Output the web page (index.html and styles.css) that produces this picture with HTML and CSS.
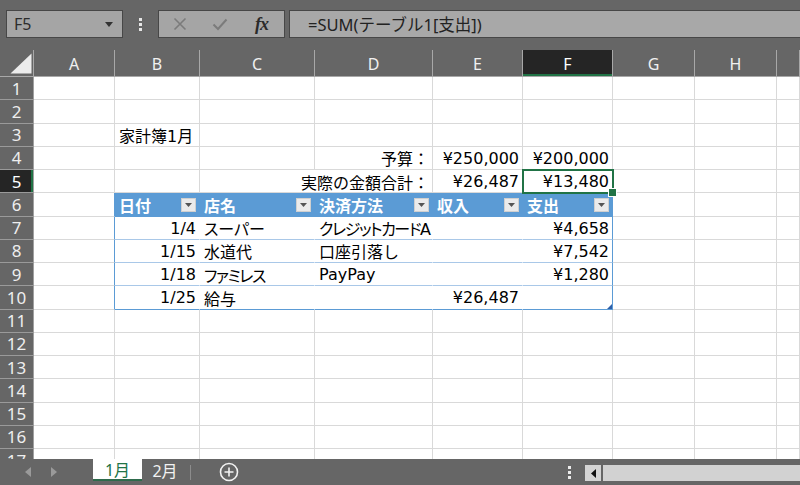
FILE: index.html
```html
<!DOCTYPE html>
<html lang="ja">
<head>
<meta charset="utf-8">
<title>家計簿</title>
<link rel="stylesheet" href="styles.css">
</head>
<body>
<div class="app">
  <div class="topbar">
    <div class="namebox"><span>F5</span><svg class="caret" width="8" height="5" viewBox="0 0 8 5"><path d="M0 0H8L4 5Z" fill="#333"/></svg></div>
    <div class="vdots"><i></i><i></i><i></i></div>
    <div class="fxbox">
      <span class="slot"><svg width="14" height="14" viewBox="0 0 14 14"><path d="M1.5 1.5L12.5 12.5M12.5 1.5L1.5 12.5" stroke="#7b7b7b" stroke-width="1.6"/></svg></span>
      <span class="slot"><svg width="16" height="13" viewBox="0 0 16 13"><path d="M1.5 6.5L6 11L14.5 1.5" stroke="#7b7b7b" stroke-width="2" fill="none"/></svg></span>
      <span class="slot fx">fx</span>
    </div>
    <div class="formula">=SUM(テーブル1[支出])</div>
  </div>

  <div class="sheet">
    <div class="corner"><svg width="33" height="26" viewBox="0 0 33 26"><path d="M10.5 23.5L31.5 3.5V23.5Z" fill="#ececec"/></svg></div>
    <div class="ch">A</div><div class="ch">B</div><div class="ch">C</div><div class="ch">D</div><div class="ch">E</div><div class="ch on">F</div><div class="ch">G</div><div class="ch">H</div><div class="ch"></div>

    <div class="rh">1</div><div class="c"></div><div class="c"></div><div class="c"></div><div class="c"></div><div class="c"></div><div class="c"></div><div class="c"></div><div class="c"></div><div class="c"></div>
    <div class="rh">2</div><div class="c"></div><div class="c"></div><div class="c"></div><div class="c"></div><div class="c"></div><div class="c"></div><div class="c"></div><div class="c"></div><div class="c"></div>
    <div class="rh">3</div><div class="c"></div><div class="c">家計簿1月</div><div class="c"></div><div class="c"></div><div class="c"></div><div class="c"></div><div class="c"></div><div class="c"></div><div class="c"></div>
    <div class="rh">4</div><div class="c"></div><div class="c"></div><div class="c"></div><div class="c r">予算：</div><div class="c r">¥250,000</div><div class="c r">¥200,000</div><div class="c"></div><div class="c"></div><div class="c"></div>
    <div class="rh on">5</div><div class="c"></div><div class="c"></div><div class="c r span2">実際の金額合計：</div><div class="c r">¥26,487</div><div class="c r sel">¥13,480</div><div class="c"></div><div class="c"></div><div class="c"></div>
    <div class="rh">6</div><div class="c tl"></div><div class="c th">日付<span class="dd"><svg width="7" height="4" viewBox="0 0 7 4"><path d="M0 0H7L3.5 4Z" fill="#555"/></svg></span></div><div class="c th">店名<span class="dd"><svg width="7" height="4" viewBox="0 0 7 4"><path d="M0 0H7L3.5 4Z" fill="#555"/></svg></span></div><div class="c th">決済方法<span class="dd"><svg width="7" height="4" viewBox="0 0 7 4"><path d="M0 0H7L3.5 4Z" fill="#555"/></svg></span></div><div class="c th">収入<span class="dd"><svg width="7" height="4" viewBox="0 0 7 4"><path d="M0 0H7L3.5 4Z" fill="#555"/></svg></span></div><div class="c th">支出<span class="dd"><svg width="7" height="4" viewBox="0 0 7 4"><path d="M0 0H7L3.5 4Z" fill="#555"/></svg></span></div><div class="c"></div><div class="c"></div><div class="c"></div>
    <div class="rh">7</div><div class="c tl"></div><div class="c tb r">1/4</div><div class="c tb p">スーパー</div><div class="c tb p tight">クレジットカードA</div><div class="c tb"></div><div class="c tb tr r">¥4,658</div><div class="c"></div><div class="c"></div><div class="c"></div>
    <div class="rh">8</div><div class="c tl"></div><div class="c tb r">1/15</div><div class="c tb">水道代</div><div class="c tb">口座引落し</div><div class="c tb"></div><div class="c tb tr r">¥7,542</div><div class="c"></div><div class="c"></div><div class="c"></div>
    <div class="rh">9</div><div class="c tl"></div><div class="c tb r">1/18</div><div class="c tb p tight">ファミレス</div><div class="c tb">PayPay</div><div class="c tb"></div><div class="c tb tr r">¥1,280</div><div class="c"></div><div class="c"></div><div class="c"></div>
    <div class="rh">10</div><div class="c tl"></div><div class="c tb tbot r">1/25</div><div class="c tb tbot">給与</div><div class="c tb tbot"></div><div class="c tb tbot r">¥26,487</div><div class="c tb tbot tr grip"></div><div class="c"></div><div class="c"></div><div class="c"></div>
    <div class="rh">11</div><div class="c"></div><div class="c"></div><div class="c"></div><div class="c"></div><div class="c"></div><div class="c"></div><div class="c"></div><div class="c"></div><div class="c"></div>
    <div class="rh">12</div><div class="c"></div><div class="c"></div><div class="c"></div><div class="c"></div><div class="c"></div><div class="c"></div><div class="c"></div><div class="c"></div><div class="c"></div>
    <div class="rh">13</div><div class="c"></div><div class="c"></div><div class="c"></div><div class="c"></div><div class="c"></div><div class="c"></div><div class="c"></div><div class="c"></div><div class="c"></div>
    <div class="rh">14</div><div class="c"></div><div class="c"></div><div class="c"></div><div class="c"></div><div class="c"></div><div class="c"></div><div class="c"></div><div class="c"></div><div class="c"></div>
    <div class="rh">15</div><div class="c"></div><div class="c"></div><div class="c"></div><div class="c"></div><div class="c"></div><div class="c"></div><div class="c"></div><div class="c"></div><div class="c"></div>
    <div class="rh">16</div><div class="c"></div><div class="c"></div><div class="c"></div><div class="c"></div><div class="c"></div><div class="c"></div><div class="c"></div><div class="c"></div><div class="c"></div>
    <div class="rh">17</div><div class="c"></div><div class="c"></div><div class="c"></div><div class="c"></div><div class="c"></div><div class="c"></div><div class="c"></div><div class="c"></div><div class="c"></div>
  </div>

  <div class="tabbar">
    <div class="nav">
      <svg width="6" height="10" viewBox="0 0 6 10"><path d="M6 0V10L0 5Z" fill="#9a9a9a"/></svg>
      <svg width="6" height="10" viewBox="0 0 6 10"><path d="M0 0V10L6 5Z" fill="#9a9a9a"/></svg>
    </div>
    <div class="tab active">1月</div>
    <div class="tab">2月</div>
    <div class="tabsep"></div>
    <div class="addsheet"><svg width="20" height="20" viewBox="0 0 20 20"><circle cx="10" cy="10" r="8.5" fill="none" stroke="#f2f2f2" stroke-width="1.6"/><path d="M10 5.5V14.5M5.5 10H14.5" stroke="#f2f2f2" stroke-width="1.6"/></svg></div>
    <div class="spacer"></div>
    <div class="hdots"><i></i><i></i><i></i></div>
    <div class="scrollleft"><svg width="5" height="9" viewBox="0 0 5 9"><path d="M5 0V9L0 4.5Z" fill="#111"/></svg></div>
    <div class="track"></div>
  </div>
</div>
</body>
</html>
```
FILE: styles.css
```css
* { box-sizing: border-box; }
html, body { margin: 0; padding: 0; }
body {
  width: 800px;
  height: 485px;
  overflow: hidden;
  background: #666666;
  font-family: "Noto Sans", "Noto Sans CJK JP", sans-serif;
}
.app { display: flex; flex-direction: column; height: 485px; }

/* formula bar */
.topbar {
  flex: none;
  height: 50px;
  display: flex;
  align-items: flex-start;
  padding: 10px 0 0 6px;
  background: #666666;
}
.namebox {
  width: 117px;
  height: 28px;
  background: #a5a5a5;
  border: 1px solid #474747;
  display: flex;
  align-items: center;
  justify-content: space-between;
  padding: 0 9px 0 7px;
  font-size: 16px;
  color: #2d2d2d;
}
.vdots {
  width: 35px;
  height: 28px;
  display: flex;
  flex-direction: column;
  align-items: center;
  justify-content: center;
  gap: 2px;
}
.vdots i { display: block; width: 3px; height: 3px; background: #e6e6e6; }
.fxbox {
  width: 127px;
  height: 28px;
  background: #a5a5a5;
  border: 1px solid #474747;
  display: flex;
  align-items: center;
  padding-left: 1px;
}
.slot { width: 40px; display: flex; justify-content: center; align-items: center; }
.fx {
  width: 43px;
  font-family: "Liberation Serif", serif;
  font-style: italic;
  font-weight: bold;
  font-size: 18px;
  color: #2a2a2a;
  letter-spacing: -1px;
}
.formula {
  flex: 1;
  height: 28px;
  margin-left: 4px;
  background: #a8a8a8;
  border: 1px solid #474747;
  border-right: none;
  padding-left: 18px;
  display: flex;
  align-items: center;
  font-size: 16.5px;
  color: #222222;
}

/* grid */
.sheet {
  flex: none;
  height: 409px;
  overflow: hidden;
  display: grid;
  grid-template-columns: 34px 81px 85px 115px 118px 90px 90px 82px 82px 23px;
  grid-template-rows: 27px;
  grid-auto-rows: 23.25px;
  background: #ffffff;
}
.corner {
  background: #666666;
  border-right: 1px solid #a8a8a8;
  border-bottom: 1px solid #a8a8a8;
  display: flex;
}
.ch {
  background: #666666;
  color: #f0f0f0;
  font-size: 16px;
  display: flex;
  align-items: center;
  justify-content: center;
  border-right: 1px solid #a8a8a8;
  border-bottom: 1px solid #a8a8a8;
  padding-top: 1px;
}
.ch.on { background: #252525; color: #ffffff; box-shadow: inset 0 -2px 0 #217346; }
.rh {
  background: #666666;
  color: #eeeeee;
  font-size: 17px;
  display: flex;
  align-items: center;
  justify-content: center;
  border-right: 1px solid #a0a0a0;
  border-bottom: 1px solid #9a9a9a;
}
.rh.on { background: #252525; color: #ffffff; box-shadow: inset -2px 0 0 #217346; }

.c {
  border-right: 1px solid #d9d9d9;
  border-bottom: 1px solid #d9d9d9;
  font-family: "DejaVu Sans", "Noto Sans CJK JP", sans-serif;
  font-size: 16px;
  color: #000000;
  display: flex;
  align-items: center;
  padding: 1px 3px 0 4px;
  white-space: nowrap;
  min-width: 0;
}
.c.r { justify-content: flex-end; }
.c.span2 { grid-column: span 2; }
.c.p { font-feature-settings: "palt"; }
.c.tight { letter-spacing: -1.4px; }

.sel { position: relative; z-index: 2; }
.sel::after {
  content: "";
  position: absolute;
  left: -1px; top: -1px; right: -2px; bottom: -2px;
  border: 2px solid #217346;
}
.sel::before {
  content: "";
  position: absolute;
  right: -5px; bottom: -5px;
  width: 7px; height: 7px;
  background: #217346;
  border: 1px solid #ffffff;
  z-index: 3;
}

/* Excel table */
.c.tl { border-right-color: #5b9bd5; }
.th {
  background: #5b9bd5;
  border-right-color: #5b9bd5;
  border-bottom-color: #5b9bd5;
  color: #ffffff;
  font-weight: bold;
  justify-content: space-between;
  padding-right: 3px;
}
.dd {
  width: 15px;
  height: 14px;
  background: #ebebeb;
  border: 1px solid #d0d0d0;
  display: flex;
  align-items: center;
  justify-content: center;
}
.tb { border-right-color: #ffffff; border-bottom-color: #a9c8e8; }
.tb.tr { border-right-color: #5b9bd5; }
.tb.tbot { border-bottom-color: #5b9bd5; }
.grip { position: relative; }
.grip::after {
  content: "";
  position: absolute;
  right: 0; bottom: 0;
  width: 0; height: 0;
  border-left: 5px solid transparent;
  border-bottom: 5px solid #2f5fa8;
}

/* sheet tabs */
.tabbar {
  flex: 1;
  display: flex;
  align-items: flex-start;
  background: #666666;
}
.nav {
  width: 93px;
  height: 26px;
  display: flex;
  align-items: center;
  padding-left: 25px;
  gap: 20px;
}
.tab {
  height: 22px;
  display: flex;
  align-items: center;
  justify-content: center;
  font-family: "Noto Sans", "Noto Sans CJK JP", sans-serif;
  font-size: 16px;
  color: #f2f2f2;
  width: 46px;
}
.tab.active {
  width: 49px;
  background: #ffffff;
  color: #217346;
  border-bottom: 2px solid #2e6b4c;
}
.tabsep { width: 1px; height: 15px; margin: 6px 0 0 2px; background: #8c8c8c; }
.addsheet { margin: 3px 0 0 28px; display: flex; }
.spacer { flex: 1; }
.hdots {
  width: 16px;
  height: 26px;
  display: flex;
  flex-direction: column;
  align-items: center;
  justify-content: center;
  gap: 2px;
  margin-right: 8px;
}
.hdots i { display: block; width: 3px; height: 3px; background: #ececec; }
.scrollleft {
  width: 16px;
  height: 16px;
  margin-top: 6px;
  background: #d4d4d4;
  display: flex;
  align-items: center;
  justify-content: center;
  margin-right: 2px;
}
.track { width: 197px; height: 16px; margin-top: 6px; background: #d2d2d2; }
```
